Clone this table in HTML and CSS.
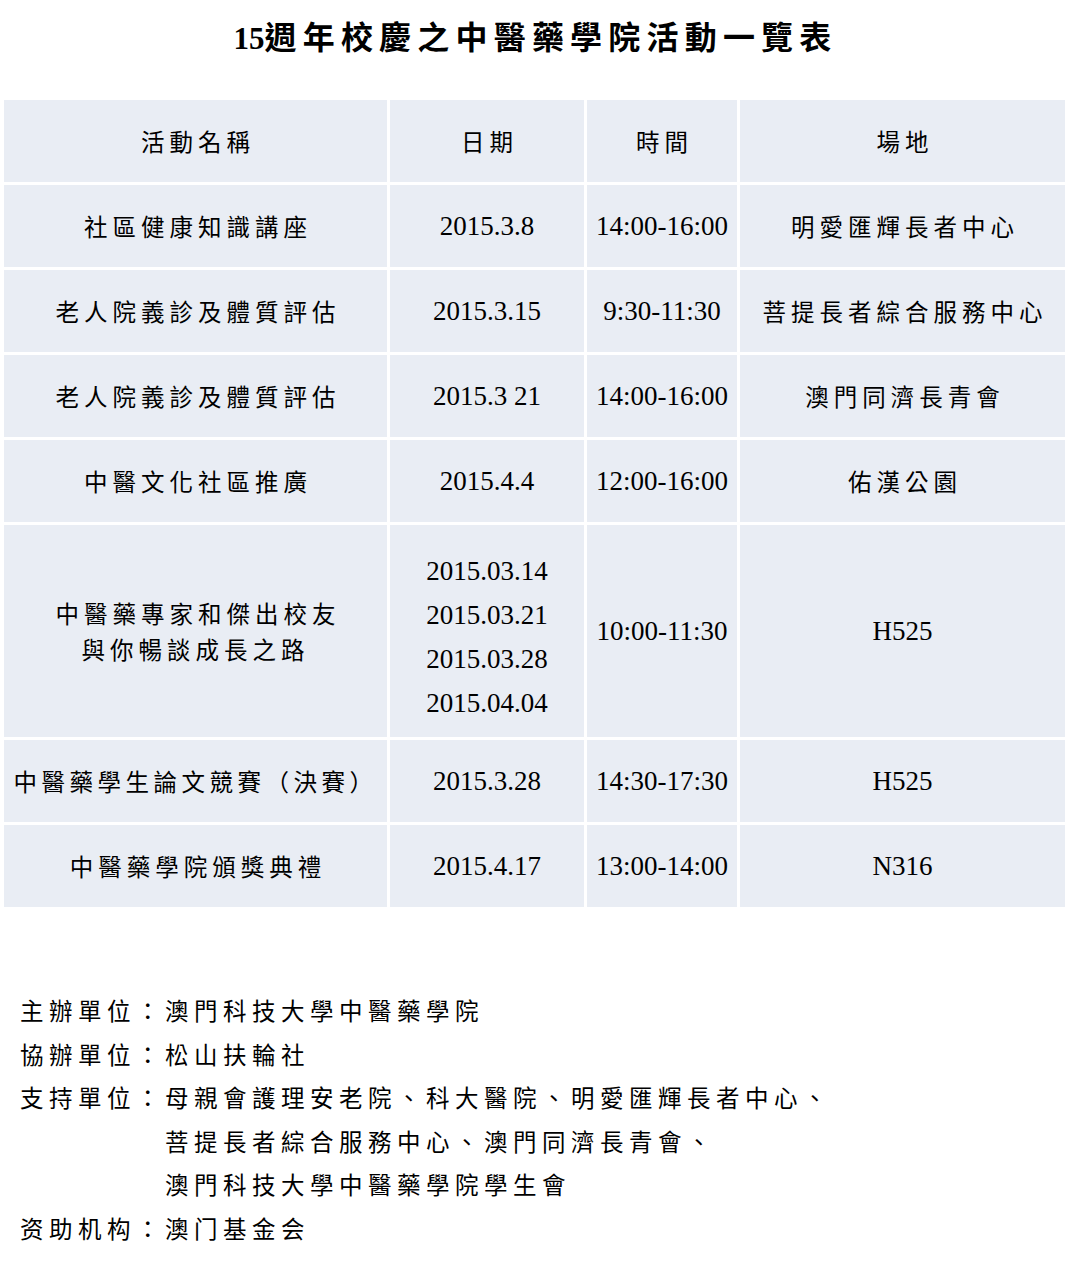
FILE: index.html
```html
<!DOCTYPE html>
<html lang="zh-Hant">
<head>
<meta charset="utf-8">
<title>15週年校慶之中醫藥學院活動一覽表</title>
<link rel="stylesheet" href="styles.css">
</head>
<body>
<h1 class="title"><span class="title-num">15</span>週年校慶之中醫藥學院活動一覽表</h1>
<table class="events">
  <colgroup>
    <col class="c-name"><col class="c-date"><col class="c-time"><col class="c-venue">
  </colgroup>
  <thead>
    <tr class="row">
      <th class="cjk">活動名稱</th>
      <th class="cjk">日期</th>
      <th class="cjk">時間</th>
      <th class="cjk">場地</th>
    </tr>
  </thead>
  <tbody>
    <tr class="row">
      <td class="cjk">社區健康知識講座</td>
      <td class="num">2015.3.8</td>
      <td class="num">14:00-16:00</td>
      <td class="cjk">明愛匯輝長者中心</td>
    </tr>
    <tr class="row">
      <td class="cjk">老人院義診及體質評估</td>
      <td class="num">2015.3.15</td>
      <td class="num">9:30-11:30</td>
      <td class="cjk">菩提長者綜合服務中心</td>
    </tr>
    <tr class="row">
      <td class="cjk">老人院義診及體質評估</td>
      <td class="num">2015.3 21</td>
      <td class="num">14:00-16:00</td>
      <td class="cjk">澳門同濟長青會</td>
    </tr>
    <tr class="row">
      <td class="cjk">中醫文化社區推廣</td>
      <td class="num">2015.4.4</td>
      <td class="num">12:00-16:00</td>
      <td class="cjk">佑漢公園</td>
    </tr>
    <tr class="row-tall">
      <td class="cjk two-line">中醫藥專家和傑出校友<br>與你暢談成長之路</td>
      <td class="num"><div class="dates">2015.03.14<br>2015.03.21<br>2015.03.28<br>2015.04.04</div></td>
      <td class="num">10:00-11:30</td>
      <td class="num">H525</td>
    </tr>
    <tr class="row">
      <td class="cjk tight">中醫藥學生論文競賽（決賽）</td>
      <td class="num">2015.3.28</td>
      <td class="num">14:30-17:30</td>
      <td class="num">H525</td>
    </tr>
    <tr class="row">
      <td class="cjk">中醫藥學院頒獎典禮</td>
      <td class="num">2015.4.17</td>
      <td class="num">13:00-14:00</td>
      <td class="num">N316</td>
    </tr>
  </tbody>
</table>
<dl class="credits">
  <dt>主辦單位：</dt>
  <dd>澳門科技大學中醫藥學院</dd>
  <dt>協辦單位：</dt>
  <dd>松山扶輪社</dd>
  <dt>支持單位：</dt>
  <dd>母親會護理安老院、科大醫院、明愛匯輝長者中心、<br>菩提長者綜合服務中心、澳門同濟長青會、<br>澳門科技大學中醫藥學院學生會</dd>
  <dt>资助机构：</dt>
  <dd>澳门基金会</dd>
</dl>
</body>
</html>
```

FILE: styles.css
```css
html, body {
  margin: 0;
  padding: 0;
  background: #ffffff;
  color: #000000;
}

body {
  width: 1067px;
  font-family: "Liberation Serif", "Noto Sans CJK TC", serif;
}

.title {
  margin: 18px 0 0 0;
  height: 40px;
  line-height: 40px;
  font-size: 32px;
  font-weight: bold;
  text-align: center;
  letter-spacing: 6.2px;
  padding-left: 4px;
  font-family: "Liberation Serif", "Noto Sans CJK TC", serif;
}

.title-num {
  letter-spacing: 0;
  font-size: 31px;
}

.events {
  margin: 39px 0 0 1px;
  border-collapse: separate;
  border-spacing: 3px;
  table-layout: fixed;
  width: 1067px;
}

.c-name { width: 383px; }
.c-date { width: 194px; }
.c-time { width: 150px; }
.c-venue { width: 325px; }

.events th,
.events td {
  background: #e9edf4;
  padding: 0;
  text-align: center;
  vertical-align: middle;
  font-weight: normal;
  white-space: nowrap;
}

.row th,
.row td {
  height: 82px;
}

.row-tall td {
  height: 212px;
}

.cjk {
  font-family: "Noto Sans CJK TC", sans-serif;
  font-size: 23.5px;
  letter-spacing: 5px;
  text-indent: 5px;
  line-height: 30px;
}

.cjk.tight {
  letter-spacing: 4.5px;
  text-indent: 0;
}

.num {
  font-family: "Liberation Serif", serif;
  font-size: 27px;
  line-height: 30px;
}

.two-line {
  line-height: 36px;
}

.dates {
  line-height: 44px;
  padding-top: 12px;
}

.credits {
  margin: 79px 0 0 20px;
  display: grid;
  grid-template-columns: 145px auto;
  font-family: "Noto Sans CJK TC", sans-serif;
  font-size: 23.5px;
  letter-spacing: 5.5px;
  line-height: 43.6px;
}

.credits dt,
.credits dd {
  margin: 0;
  white-space: nowrap;
}
```
